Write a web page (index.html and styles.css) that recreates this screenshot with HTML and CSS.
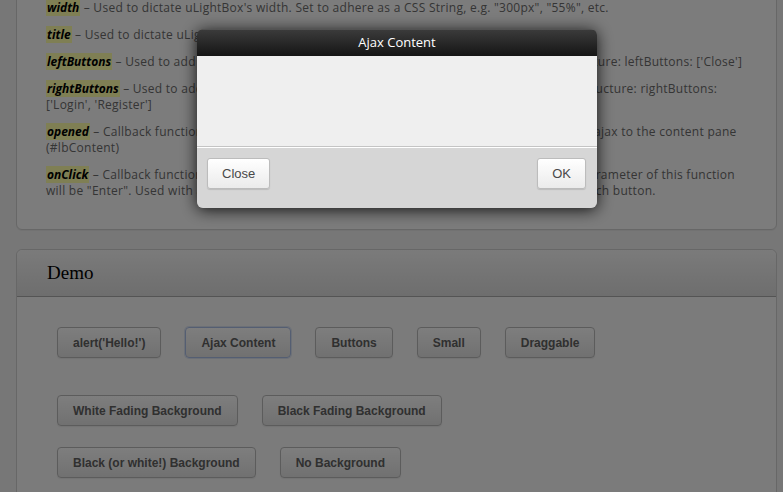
FILE: index.html
```html
<!DOCTYPE html>
<html lang="en">
<head>
<meta charset="utf-8">
<title>uLightBox Demo</title>
<link rel="stylesheet" href="styles.css">
</head>
<body>
<div class="page">
  <section class="panel panel-options">
    <p><span class="kw">width</span> – Used to dictate uLightBox's width. Set to adhere as a CSS String, e.g. "300px", "55%", etc.</p>
    <p><span class="kw">title</span> – Used to dictate uLightBox's title. Set as a String.</p>
    <p><span class="kw">leftButtons</span> – Used to add buttons to the left side of the footer. Set as an Array, with this structure: leftButtons: ['Close']</p>
    <p><span class="kw">rightButtons</span> – Used to add buttons to the right side of the footer. Set as an Array, with this structure: rightButtons:<br>['Login', 'Register']</p>
    <p><span class="kw">opened</span> – Callback function called when uLightBox opens. Commonly used to load content via ajax to the content pane<br>(#lbContent)</p>
    <p><span class="kw">onClick</span> – Callback function that is called when one of the footer buttons is clicked. The first parameter of this function<br>will be "Enter". Used with a switch() statement on the name to create separate callbacks for each button.</p>
  </section>

  <section class="panel panel-demo">
    <h3 class="panel-head">Demo</h3>
    <div class="panel-body">
      <div class="btn-row btn-row-main">
        <button class="btn">alert('Hello!')</button>
        <button class="btn is-focused">Ajax Content</button>
        <button class="btn">Buttons</button>
        <button class="btn">Small</button>
        <button class="btn">Draggable</button>
      </div>
      <div class="btn-row btn-row-bg">
        <button class="btn">White Fading Background</button>
        <button class="btn">Black Fading Background</button>
      </div>
      <div class="btn-row">
        <button class="btn">Black (or white!) Background</button>
        <button class="btn">No Background</button>
      </div>
    </div>
  </section>
</div>

<div class="overlay"></div>

<div class="lightbox">
  <div class="lb-title">Ajax Content</div>
  <div class="lb-content"></div>
  <div class="lb-footer">
    <button class="lb-btn">Close</button>
    <button class="lb-btn">OK</button>
  </div>
</div>
</body>
</html>
```
FILE: styles.css
```css
* { box-sizing: border-box; }

html, body {
  margin: 0;
  padding: 0;
  height: 100%;
  overflow: hidden;
}

body {
  background: #efefef;
  font-family: "Open Sans", "DejaVu Sans", sans-serif;
  font-size: 12px;
  letter-spacing: 0.27px;
  line-height: 16px;
  color: #6a6a6a;
}

.page {
  padding: 0 6px 0 16px;
}

.panel {
  background: #f9f9f9;
  border: 1px solid #cfcfcf;
  border-radius: 6px;
  box-shadow: inset 0 1px 0 #ffffff, 0 1px 1px rgba(0, 0, 0, 0.05);
}

/* page is scrolled: top of the options panel is above the viewport */
.panel-options {
  margin-top: -31px;
  padding: 30px 28px 30px 29px;
}

.panel-options p {
  margin: 0 0 11px;
  white-space: nowrap;
}

.panel-options p:last-child {
  margin-bottom: 0;
}

.kw {
  background: #ffffa8;
  color: #000;
  font-weight: bold;
  font-style: italic;
  letter-spacing: 0;
  padding: 0 1px;
}

.panel-demo {
  margin-top: 19px;
  background: #f6f6f6;
}

.panel-head {
  margin: 0;
  height: 47px;
  padding-left: 30px;
  border-bottom: 1px solid #a9a9a9;
  border-radius: 6px 6px 0 0;
  background: linear-gradient(#f6f6f6, #dcdcdc);
  font-family: "Liberation Serif", "Times New Roman", serif;
  font-weight: normal;
  font-size: 19px;
  letter-spacing: 0;
  line-height: 46px;
  color: #000;
}

.panel-body {
  padding: 30px 40px 14px;
}

.btn-row {
  display: flex;
  gap: 24px;
  margin-bottom: 21px;
}

.btn-row-main {
  margin-bottom: 37px;
}

.btn {
  height: 31px;
  padding: 0 15px;
  border: 1px solid #b9b9b9;
  border-radius: 4px;
  background: linear-gradient(#fcfcfc, #e2e2e2);
  font-family: "Liberation Sans", Arial, sans-serif;
  font-weight: bold;
  font-size: 12px;
  letter-spacing: 0;
  color: #606060;
  box-shadow: 0 1px 1px rgba(0, 0, 0, 0.06);
}

.btn.is-focused {
  border-color: #a9bce4;
  box-shadow: 0 0 0 1px rgba(160, 182, 226, 0.35);
}

.overlay {
  position: fixed;
  inset: 0;
  background: rgba(0, 0, 0, 0.5);
}

.lightbox {
  position: fixed;
  left: 197px;
  top: 29px;
  width: 400px;
  border-radius: 6px;
  overflow: hidden;
  box-shadow: 0 2px 16px rgba(0, 0, 0, 0.85);
  letter-spacing: 0;
}

.lb-title {
  height: 27px;
  background: linear-gradient(#3c3c3c, #151515);
  box-shadow: inset 0 1px 0 rgba(255, 255, 255, 0.12);
  color: #fff;
  text-align: center;
  font-family: "Open Sans", "DejaVu Sans", sans-serif;
  font-size: 13px;
  line-height: 27px;
}

.lb-content {
  height: 90px;
  background: #efefef;
}

.lb-footer {
  display: flex;
  justify-content: space-between;
  padding: 11px 11px 19px 10px;
  background: #d6d6d6;
  border-top: 1px solid #c4c4c4;
  box-shadow: inset 0 1px 0 #ffffff;
}

.lb-btn {
  height: 31px;
  padding: 0 14px;
  border: 1px solid #bcbcbc;
  border-radius: 3px;
  background: linear-gradient(#ffffff, #ebebeb);
  font-family: "Liberation Sans", Arial, sans-serif;
  font-size: 13px;
  color: #484848;
  box-shadow: 0 1px 1px rgba(0, 0, 0, 0.12);
}
```
